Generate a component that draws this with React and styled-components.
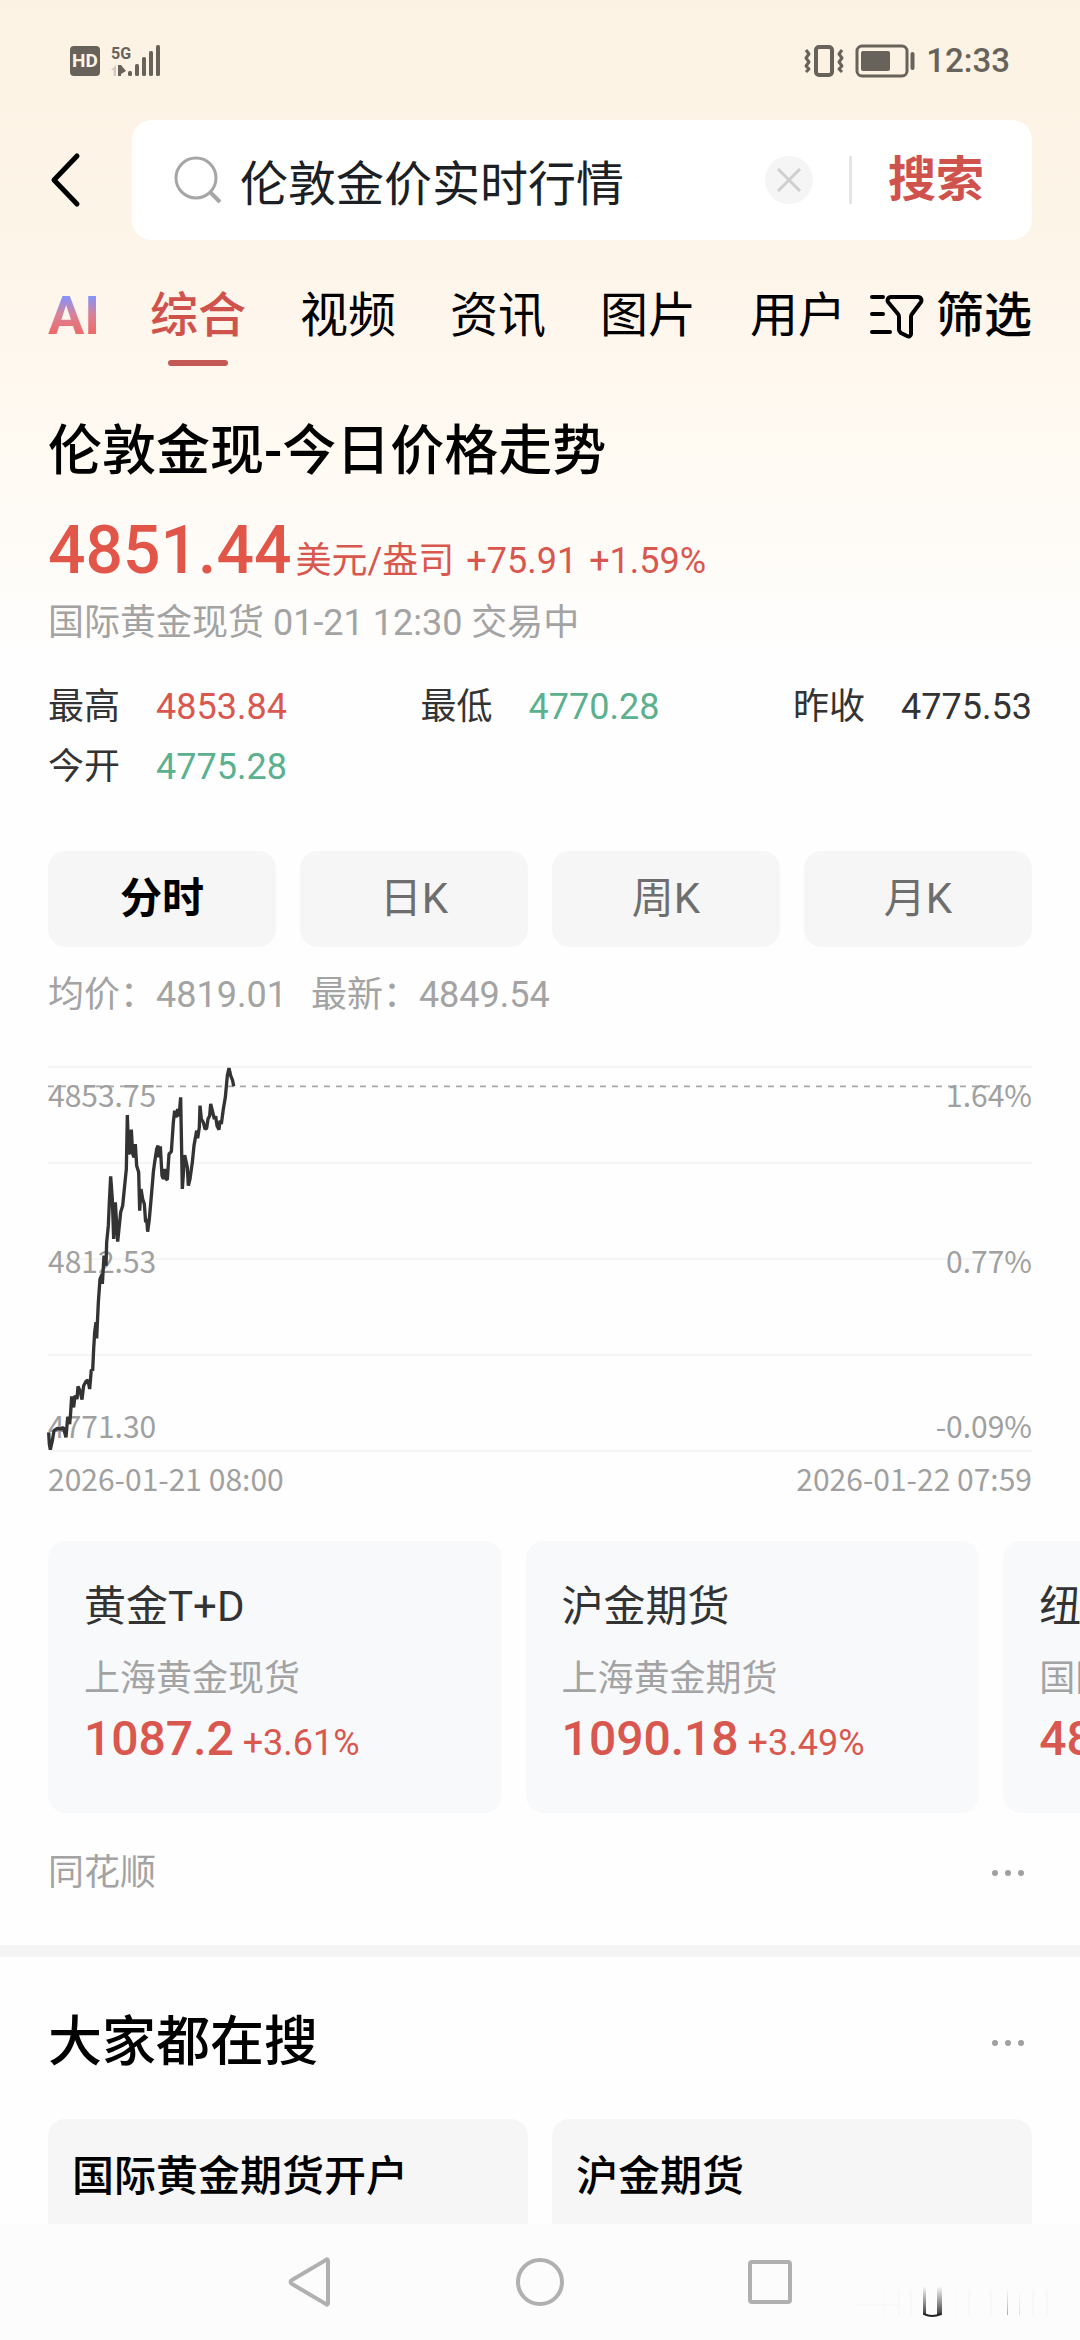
import React, { useState } from "react";
import styled, { createGlobalStyle, css } from "styled-components";

const STATS = [
  { label: "最高", value: "4853.84", tone: "up" },
  { label: "最低", value: "4770.28", tone: "down" },
  { label: "昨收", value: "4775.53", tone: "flat" },
  { label: "今开", value: "4775.28", tone: "down" },
];

const TABS = ["综合", "视频", "资讯", "图片", "用户"];
const PERIODS = ["分时", "日K", "周K", "月K"];

const PRODUCTS = [
  { name: "黄金T+D", market: "上海黄金现货", price: "1087.2", change: "+3.61%" },
  { name: "沪金期货", market: "上海黄金期货", price: "1090.18", change: "+3.49%" },
  { name: "纽约黄金", market: "国际黄金期货", price: "4849.5", change: "+1.76%" },
];

const HOT = ["国际黄金期货开户", "沪金期货"];

const TONES = { up: "#d8574e", down: "#5bb08f", flat: "#333333" };

// minute prices, plotted in a 2952 x 1152 box
const MINUTE_LINE =
  "2,1096 4,1131 7,1148 13,1121 18,1091 28,1084 38,1086 46,1081 54,1111 59,1051 65,1071 68,1036 71,988 77,1021 " +
  "81,986 87,996 90,958 96,971 102,998 107,956 114,943 120,940 125,966 130,908 134,911 137,846 140,796 144,766 " +
  "146,814 151,706 156,636 162,621 163,651 168,566 174,596 176,526 181,476 184,406 188,328 193,396 197,516 " +
  "202,406 209,524 218,436 224,416 230,356 235,306 238,144 242,261 246,256 250,188 254,261 258,271 262,231 " +
  "266,296 272,316 275,431 279,366 284,396 289,411 293,466 296,456 299,494 304,456 311,376 316,316 320,286 " +
  "326,246 330,236 332,271 337,238 342,326 346,336 350,306 354,336 358,338 363,261 370,254 376,166 380,131 " +
  "384,151 389,126 393,148 398,91 403,366 410,264 418,301 421,356 426,336 433,286 438,236 446,191 449,214 " +
  "454,181 456,116 460,156 466,166 471,186 476,184 480,156 485,146 488,111 493,131 499,156 503,148 507,176 " +
  "513,188 516,161 520,171 526,126 532,91 538,26 543,3 548,26 554,41 557,58";

const App = () => {
  return (
    <>
      <GlobalStyle />
      <Screen>
        <Scroller>
          <StatusBar />
          <SearchHeader />
          <TabBar />
          <Quote />
          <Products />
          <SourceRow>
            <span>同花顺</span>
            <MoreButton />
          </SourceRow>
          <Divider />
          <HotSearch />
        </Scroller>
        <SystemNav />
      </Screen>
    </>
  );
};

const StatusBar = () => (
  <StatusRow>
    <StatusGroup>
      <HdBadge>HD</HdBadge>
      <SignalIcon />
    </StatusGroup>
    <StatusGroup>
      <VibrateIcon />
      <BatteryIcon />
      <span>12:33</span>
    </StatusGroup>
  </StatusRow>
);

const SignalIcon = () => (
  <svg width="50" height="32" viewBox="0 0 50 32" fill="#67635b">
    <text x="0" y="14" fontFamily="Roboto" fontWeight="700" fontSize="16">
      5G
    </text>
    <path d="M5 20v11h-2.500v-6H0z" fill="#d5cbbd" />
    <path d="M7 20h3l5 6-5 3v2H7z" />
    <rect x="17" y="26" width="4" height="5" rx="1.500" />
    <rect x="24" y="19" width="4" height="12" rx="1.500" />
    <rect x="31" y="12" width="4" height="19" rx="1.500" />
    <rect x="38" y="6" width="4" height="25" rx="1.500" />
    <rect x="45" y="0" width="4" height="31" rx="1.500" />
  </svg>
);

const VibrateIcon = () => (
  <svg width="40" height="34" viewBox="0 0 40 34" fill="none" stroke="#67635b" strokeWidth="3">
    <rect x="12" y="3" width="16" height="28" rx="3" strokeWidth="4" />
    <path d="M2 6l3 4-3 4 3 4-3 4 3 3-3 3" strokeLinejoin="round" />
    <path d="M38 6l-3 4 3 4-3 4 3 4-3 3 3 3" strokeLinejoin="round" />
  </svg>
);

const BatteryIcon = () => (
  <svg width="60" height="34" viewBox="0 0 60 34" fill="none" stroke="#67635b">
    <rect x="2" y="2" width="50" height="30" rx="5" strokeWidth="3" />
    <rect x="6" y="7" width="29" height="20" rx="2" fill="#67635b" stroke="none" />
    <path d="M57.500 10v14" strokeWidth="4" strokeLinecap="round" />
  </svg>
);

const SearchHeader = () => {
  const [query, setQuery] = useState("伦敦金价实时行情");
  return (
    <HeaderRow>
      <BackButton aria-label="返回">
        <svg width="36" height="56" viewBox="0 0 36 56" fill="none" stroke="#000">
          <path d="M29 4L6 28l23 24" strokeWidth="5" strokeLinecap="round" strokeLinejoin="round" />
        </svg>
      </BackButton>
      <SearchBox onSubmit={(e) => e.preventDefault()}>
        <svg width="48" height="48" viewBox="0 0 48 48" fill="none" stroke="#a6a6a6" strokeWidth="3">
          <circle cx="22" cy="22" r="20" />
          <path d="M36 36l10 10" strokeWidth="4" />
        </svg>
        <SearchInput
          aria-label="搜索"
          value={query}
          onChange={(e) => setQuery(e.target.value)}
        />
        <ClearButton type="button" aria-label="清空" onClick={() => setQuery("")}>
          <svg width="24" height="24" viewBox="0 0 24 24" stroke="#cfcfcf" strokeWidth="3">
            <path d="M1 1l22 22M23 1L1 23" />
          </svg>
        </ClearButton>
        <BoxLine />
        <SubmitButton type="submit">搜索</SubmitButton>
      </SearchBox>
    </HeaderRow>
  );
};

const TabBar = () => {
  const [active, setActive] = useState("综合");
  return (
    <TabRow>
      <TabList>
        <AiTab>AI</AiTab>
        {TABS.map((name) => (
          <Tab key={name} $active={name === active} onClick={() => setActive(name)}>
            {name}
          </Tab>
        ))}
      </TabList>
      <FilterButton>
        <svg width="54" height="46" viewBox="0 0 54 46" fill="none" stroke="#000" strokeWidth="4">
          <path d="M2 4h11M2 21h11M2 39h18" strokeLinecap="round" />
          <path
            d="M21 4h27c3 0 4 3 3 5l-9 12c-1 1-1 2-1 3v17c0 2-2 3-4 2l-6-3c-1-1-2-2-2-3V24c0-1 0-2-1-3L18 9c-1-2 0-5 3-5z"
            strokeLinejoin="round"
          />
        </svg>
        筛选
      </FilterButton>
    </TabRow>
  );
};

const Quote = () => {
  const [period, setPeriod] = useState("分时");
  return (
    <Section>
      <Title>伦敦金现-今日价格走势</Title>
      <PriceRow>
        <Price>4851.44</Price>
        <span>美元/盎司</span>
        <Change>+75.91</Change>
        <Change>+1.59%</Change>
      </PriceRow>
      <Note>国际黄金现货 01-21 12:30 交易中</Note>
      <StatGrid>
        {STATS.map((s) => (
          <Stat key={s.label}>
            <dt>{s.label}</dt>
            <StatValue $tone={s.tone}>{s.value}</StatValue>
          </Stat>
        ))}
      </StatGrid>
      <PeriodRow>
        {PERIODS.map((p) => (
          <PeriodButton key={p} $active={p === period} onClick={() => setPeriod(p)}>
            {p}
          </PeriodButton>
        ))}
      </PeriodRow>
      <AverageRow>
        <span>均价：4819.01</span>
        <span>最新：4849.54</span>
      </AverageRow>
      <Chart />
    </Section>
  );
};

const Chart = () => (
  <>
    <ChartArea>
      <ChartSvg viewBox="0 0 2952 1152" preserveAspectRatio="none">
        {[0, 288, 576, 864, 1152].map((y) => (
          <path key={y} d={`M0 ${y}H2952`} stroke="#f5f5f5" strokeWidth="6" />
        ))}
        <path d="M0 58H2952" stroke="#a8a8a8" strokeWidth="5" strokeDasharray="18 18" />
      </ChartSvg>
      <AxisLabels>
        <AxisRow>
          <span>4853.75</span>
          <span>1.64%</span>
        </AxisRow>
        <AxisRow>
          <span>4812.53</span>
          <span>0.77%</span>
        </AxisRow>
        <AxisRow>
          <span>4771.30</span>
          <span>-0.09%</span>
        </AxisRow>
      </AxisLabels>
      <ChartSvg viewBox="0 0 2952 1152" preserveAspectRatio="none">
        <polyline points={MINUTE_LINE} stroke="#333" strokeWidth="10" strokeLinejoin="bevel" />
      </ChartSvg>
    </ChartArea>
    <DateRow>
      <span>2026-01-21 08:00</span>
      <span>2026-01-22 07:59</span>
    </DateRow>
  </>
);

const Products = () => (
  <ProductList>
    {PRODUCTS.map((p) => (
      <ProductCard key={p.name}>
        <ProductName>{p.name}</ProductName>
        <ProductMarket>{p.market}</ProductMarket>
        <ProductPrice>
          <strong>{p.price}</strong> {p.change}
        </ProductPrice>
      </ProductCard>
    ))}
  </ProductList>
);

const MoreButton = () => (
  <DotsButton aria-label="更多">
    <svg width="36" height="8" viewBox="0 0 36 8" fill="#a0a0a0">
      <circle cx="5" cy="4" r="3" />
      <circle cx="18" cy="4" r="3" />
      <circle cx="31" cy="4" r="3" />
    </svg>
  </DotsButton>
);

const HotSearch = () => (
  <HotSection>
    <HotHeader>
      <Title>大家都在搜</Title>
      <MoreButton />
    </HotHeader>
    <HotGrid>
      {HOT.map((word) => (
        <HotCard key={word} href="#">
          {word}
        </HotCard>
      ))}
    </HotGrid>
  </HotSection>
);

const SystemNav = () => (
  <NavBar>
    <NavButton aria-label="后退">
      <svg width="48" height="52" viewBox="0 0 48 52" fill="none" stroke="#b0b0b0" strokeWidth="4">
        <path d="M42 5v42c0 2-1 2-2 1L6 28c-2-1-2-3 0-4L40 4c1-1 2-1 2 1z" />
      </svg>
    </NavButton>
    <NavButton aria-label="主页">
      <svg width="52" height="52" viewBox="0 0 52 52" fill="none" stroke="#b0b0b0" strokeWidth="4">
        <circle cx="26" cy="26" r="22" />
      </svg>
    </NavButton>
    <NavButton aria-label="最近任务">
      <svg width="48" height="52" viewBox="0 0 48 52" fill="none" stroke="#b0b0b0" strokeWidth="4">
        <rect x="4" y="6" width="40" height="40" rx="2" />
      </svg>
    </NavButton>
    <Mark />
  </NavBar>
);

const Mark = () => (
  <MarkSvg width="200" height="40" viewBox="0 0 200 40">
    <defs>
      <linearGradient id="fade" x1="0" y1="0" x2="0" y2="1">
        <stop offset="0" stopColor="#333" stopOpacity="0" />
        <stop offset="1" stopColor="#222" stopOpacity="0.900" />
      </linearGradient>
    </defs>
    <g fill="url(#fade)">
      <rect x="67" y="6" width="3" height="29" />
      <rect x="81" y="6" width="5" height="29" />
      <rect x="151" y="8" width="1" height="27" opacity="0.400" />
      <rect x="163" y="8" width="1" height="27" opacity="0.150" />
    </g>
    <path d="M68 34q8 4 17 0" fill="none" stroke="#222" strokeWidth="2" />
    <g fill="#f8f8f8">
      <rect x="0" y="24" width="42" height="2" />
      <rect x="27" y="10" width="1" height="26" />
      <rect x="42" y="10" width="2" height="26" />
      <rect x="54" y="10" width="2" height="26" />
      <rect x="100" y="10" width="1" height="26" />
      <rect x="112" y="10" width="2" height="26" />
      <rect x="134" y="10" width="2" height="26" />
      <rect x="176" y="10" width="2" height="26" />
      <rect x="190" y="10" width="2" height="26" />
    </g>
  </MarkSvg>
);

const GlobalStyle = createGlobalStyle`
  * {
    box-sizing: border-box;
  }
  body {
    margin: 0;
    font-family: Roboto, "Noto Sans CJK SC", sans-serif;
    font-size: 36px;
    line-height: 48px;
    color: #333;
  }
  button, input {
    margin: 0;
    padding: 0;
    border: 0;
    background: none;
    color: inherit;
    font: inherit;
  }
  svg {
    display: block;
    flex: none;
  }
`;

const Screen = styled.div`
  height: 100vh;
  display: flex;
  flex-direction: column;
  background: #fefefe;
`;

const Scroller = styled.div`
  flex: 1;
  min-height: 0;
  overflow: hidden;
  background: linear-gradient(#fcf2e3 0, #fef5ea 270px, #fffaf2 450px, #fefefe 660px);
`;

const StatusRow = styled.div`
  display: flex;
  justify-content: space-between;
  align-items: center;
  height: 120px;
  padding: 2px 70px 0;
  font-size: 33px;
  font-weight: 500;
  color: #67635b;
`;

const StatusGroup = styled.div`
  display: flex;
  align-items: center;
  gap: 11px;
`;

const HdBadge = styled.span`
  width: 30px;
  height: 30px;
  border-radius: 4px;
  background: #67635b;
  color: #fef3e4;
  font-size: 19px;
  font-weight: 700;
  line-height: 30px;
  text-align: center;
`;

const HeaderRow = styled.header`
  display: flex;
  align-items: center;
  padding: 0 48px;
`;

const BackButton = styled.button`
  width: 84px;
  height: 120px;
`;

const SearchBox = styled.form`
  flex: 1;
  min-width: 0;
  display: flex;
  align-items: center;
  height: 120px;
  padding: 0 48px 0 42px;
  border-radius: 20px;
  background: #fff;
`;

const SearchInput = styled.input`
  flex: 1;
  min-width: 0;
  height: 72px;
  margin-left: 18px;
  font-size: 48px;
  color: #1c1f24;
  outline: none;
`;

const ClearButton = styled.button`
  display: flex;
  align-items: center;
  justify-content: center;
  width: 48px;
  height: 48px;
  border-radius: 50%;
  background: #f5f5f5;
`;

const BoxLine = styled.span`
  width: 3px;
  height: 48px;
  margin: 0 36px;
  background: #e5e5e5;
`;

const SubmitButton = styled.button`
  font-size: 48px;
  line-height: 72px;
  font-weight: 700;
  color: #d0524c;
`;

const TabRow = styled.nav`
  display: flex;
  align-items: flex-start;
  justify-content: space-between;
  gap: 24px;
  margin-top: 40px;
  padding: 0 48px;
  font-size: 48px;
  line-height: 72px;
  color: #000;
`;

const TabList = styled.div`
  display: flex;
  align-items: flex-start;
  gap: 54px;
`;

const Tab = styled.button`
  flex: none;
  padding-bottom: 14px;
  line-height: 72px;
  ${(props) =>
    props.$active &&
    css`
      padding-bottom: 0;
      font-weight: 500;
      color: #d0524c;

      &::after {
        content: "";
        display: block;
        width: 60px;
        height: 6px;
        margin: 8px auto 0;
        border-radius: 3px;
        background: #c45a55;
      }
    `}
`;

const AiTab = styled.button`
  width: 48px;
  font-size: 54px;
  font-weight: 700;
  line-height: 72px;
  background: linear-gradient(#8a92f5 25%, #d98298 48%, #ee6a66 76%);
  background-clip: text;
  color: transparent;
`;

const FilterButton = styled.button`
  display: flex;
  align-items: center;
  gap: 12px;
  font-weight: 500;
  line-height: 72px;
  white-space: nowrap;
`;

const Section = styled.section`
  padding: 50px 48px 0;
`;

const Title = styled.h2`
  margin: 0;
  font-size: 54px;
  line-height: 72px;
  font-weight: 500;
  color: #000;
`;

const PriceRow = styled.div`
  display: flex;
  align-items: baseline;
  margin-top: 24px;
  color: ${TONES.up};
`;

const Price = styled.strong`
  margin-right: 4px;
  font-size: 66px;
  line-height: 78px;
  font-weight: 500;
  color: #e2564a;
`;

const Change = styled.span`
  margin-left: 12px;
`;

const Note = styled.p`
  margin: 9px 0 0;
  color: #a3a3a3;
`;

const StatGrid = styled.dl`
  display: grid;
  grid-template-columns: repeat(3, auto);
  justify-content: space-between;
  row-gap: 12px;
  margin: 36px 0 0;
`;

const Stat = styled.div`
  display: flex;
  gap: 36px;
`;

const StatValue = styled.dd`
  margin: 0;
  color: ${(props) => TONES[props.$tone]};
`;

const PeriodRow = styled.div`
  display: grid;
  grid-template-columns: repeat(4, 1fr);
  gap: 24px;
  margin-top: 60px;
`;

const PeriodButton = styled.button`
  height: 96px;
  border-radius: 18px;
  background: #f6f6f6;
  font-size: 42px;
  font-weight: ${(props) => (props.$active ? 700 : 400)};
  color: ${(props) => (props.$active ? "#000" : "#6e6e6e")};
`;

const AverageRow = styled.div`
  display: flex;
  gap: 24px;
  margin-top: 24px;
  color: #a3a3a3;
`;

const ChartArea = styled.div`
  position: relative;
  height: 384px;
  margin-top: 48px;
  font-family: "Noto Sans CJK SC", sans-serif;
  font-size: 30px;
  line-height: 36px;
  color: #a0a0a0;
`;

const ChartSvg = styled.svg`
  position: absolute;
  inset: 0;
  width: 100%;
  height: 100%;
  fill: none;
  overflow: visible;
`;

const AxisLabels = styled.div`
  position: absolute;
  inset: 9px 0 8px;
  display: flex;
  flex-direction: column;
  justify-content: space-between;
`;

const AxisRow = styled.div`
  display: flex;
  justify-content: space-between;
`;

const DateRow = styled(AxisRow)`
  margin-top: 9px;
  font-family: "Noto Sans CJK SC", sans-serif;
  font-size: 30px;
  line-height: 36px;
  color: #a0a0a0;
`;

const ProductList = styled.div`
  display: flex;
  gap: 24px;
  margin-top: 45px;
  padding-left: 48px;
  overflow: hidden;
`;

const ProductCard = styled.article`
  flex: 0 0 42vw;
  padding: 36px 36px 40px;
  border-radius: 18px;
  background: #f8f9fb;
`;

const ProductName = styled.h3`
  margin: 0;
  font-size: 42px;
  line-height: 60px;
  font-weight: 400;
`;

const ProductMarket = styled.p`
  margin: 18px 0 6px;
  color: #a3a3a3;
`;

const ProductPrice = styled.p`
  margin: 0;
  line-height: 60px;
  white-space: nowrap;
  color: ${TONES.up};

  strong {
    font-size: 48px;
    font-weight: 500;
  }
`;

const SourceRow = styled.footer`
  display: flex;
  justify-content: space-between;
  align-items: center;
  margin: 36px 0 48px;
  padding: 0 48px;
  color: #a3a3a3;
`;

const DotsButton = styled.button`
  padding: 12px 6px;
`;

const Divider = styled.div`
  height: 12px;
  background: #f4f4f4;
`;

const HotSection = styled.section`
  padding: 50px 48px 0;
`;

const HotHeader = styled.div`
  display: flex;
  justify-content: space-between;
  align-items: center;
`;

const HotGrid = styled.div`
  display: grid;
  grid-template-columns: 1fr 1fr;
  gap: 24px;
  margin-top: 40px;
`;

const HotCard = styled.a`
  min-height: 144px;
  padding: 28px 24px;
  border-radius: 18px;
  background: #f6f6f6;
  font-size: 42px;
  line-height: 60px;
  font-weight: 500;
  color: #000;
  text-decoration: none;
`;

const NavBar = styled.nav`
  position: relative;
  flex: none;
  display: flex;
  justify-content: center;
  align-items: center;
  gap: 134px;
  height: 116px;
  background: #fcfcfc;
`;

const NavButton = styled.button`
  display: flex;
  align-items: center;
  justify-content: center;
  width: 96px;
  height: 96px;
`;

const MarkSvg = styled.svg`
  position: absolute;
  right: 24px;
  bottom: 20px;
`;

export default App;
